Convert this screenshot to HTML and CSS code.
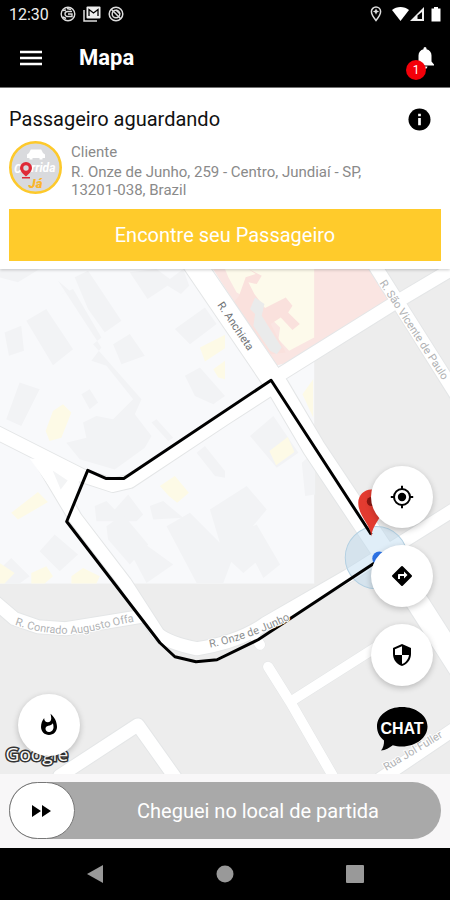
FILE: index.html
```html
<!DOCTYPE html>
<html lang="pt-BR">
<head>
<meta charset="utf-8">
<meta name="viewport" content="width=device-width, initial-scale=1">
<title>Mapa</title>
<link rel="stylesheet" href="styles.css">
</head>
<body>
<div class="app">
  <div class="status">
    <span class="clock">12:30</span>
    <svg class="status-icon" viewBox="0 0 16 16" aria-hidden="true"><g fill="none" stroke="#ddd" stroke-width="1.4"><circle cx="8" cy="8" r="6.8"/><path d="M12 5.500H7.500a2.500 2.500 0 0 0 0 5H12V8H8M3 4.500l3-.5M3 11l3 1.500M11 3.500l-4-1"/></g></svg>
    <svg class="status-icon wide" viewBox="0 0 18 16" aria-hidden="true"><path d="M1 4v11h13" fill="none" stroke="#ddd" stroke-width="1.500"/><rect x="3.500" y=".5" width="14" height="12" rx="1" fill="#eee"/><path d="M6 10V3.500l4.500 3.500L15 3.500V10" fill="none" stroke="#000" stroke-width="1.300"/></svg>
    <svg class="status-icon" viewBox="0 0 16 16" aria-hidden="true"><g fill="none" stroke="#ddd" stroke-width="1.500"><circle cx="8" cy="8" r="6.800"/><circle cx="8" cy="8" r="3.800"/><path d="M3 3l10 10M8 4l4 4"/></g></svg>
    <span class="spacer"></span>
    <svg class="status-pin" viewBox="0 0 12 16" aria-hidden="true"><path d="M6 1a4.600 4.600 0 0 0-4.600 4.600C1.400 9 6 14.500 6 14.500S10.600 9 10.600 5.600A4.600 4.600 0 0 0 6 1z" fill="none" stroke="#ddd" stroke-width="1.500"/><path d="M6 2.500l1 2.100 2.100 1-2.100 1L6 8.700l-1-2.100-2.100-1 2.100-1z" fill="#ddd"/></svg>
    <svg class="signals" viewBox="0 0 50 16" aria-hidden="true"><path d="M0 4C4.500 0 12.500 0 17 4L8.500 15z" fill="#fff"/><path d="M32 1v14H18z" fill="#eee"/><path d="M30 6v7h-4.500V9.500z" fill="#000"/><path d="M42 1h4v1.500h2.500V15.500h-9V2.500H42z" fill="#fff"/></svg>
  </div>
  <header class="bar">
    <button class="icon-btn menu" aria-label="Menu"><svg viewBox="0 0 22 16"><path d="M0 2h22M0 8h22M0 14h22" stroke="#fff" stroke-width="2.400"/></svg></button>
    <h1>Mapa</h1>
    <button class="icon-btn bell" aria-label="Notificações"><svg viewBox="0 0 18 22"><path d="M9 0a1.500 1.500 0 0 1 1.500 1.500v.7c3 .7 5 3.200 5 6.300v6l2.500 3v1H0v-1l2.500-3v-6c0-3.100 2-5.600 5-6.300v-.7A1.500 1.500 0 0 1 9 0zM6.500 19.500h5a2.500 2.500 0 0 1-5 0z" fill="#fff"/></svg><span class="badge">1</span></button>
  </header>

  <section class="card">
    <div class="card-head">
      <h2>Passageiro aguardando</h2>
      <button class="icon-btn info" aria-label="Informações"><svg viewBox="0 0 24 24"><circle cx="12" cy="12" r="11.500" fill="#000"/><path d="M10.600 6h2.800v2.600h-2.800zM10.600 10.500h2.800V18h-2.800z" fill="#fff"/></svg></button>
    </div>
    <div class="client">
      <svg class="avatar" viewBox="0 0 53 53" aria-hidden="true">
        <circle cx="26.500" cy="26.500" r="25.200" fill="#d9dadd" stroke="#fdc92b" stroke-width="2.600"/>
        <path d="M18 17v-3.500l2-1.500 1.800-3.500h10.400L34 12l2 1.500V17h-2.500v1.500h-3V17h-7v1.500h-3V17z" fill="#fff"/>
        <text class="logo-word" x="5" y="32">C</text>
        <text class="logo-word" x="22" y="31">rrida</text>
        <path d="M17 21a6 6 0 0 0-6 6c0 4 6 8.500 6 8.500s6-4.500 6-8.500a6 6 0 0 0-6-6zm0 3.300a2.700 2.700 0 1 1 0 5.400 2.700 2.700 0 0 1 0-5.400zM13 36h8v1.500h-8z" fill="#df2a38"/>
        <text class="logo-ja" x="26.500" y="47" text-anchor="middle">Já</text>
      </svg>
      <div class="client-text">
        <p>Cliente</p>
        <p>R. Onze de Junho, 259 - Centro, Jundiaí - SP, 13201-038, Brazil</p>
      </div>
    </div>
    <button class="find">Encontre seu Passageiro</button>
  </section>

  <main class="map">
    <svg class="map-art" viewBox="0 270 450 504" preserveAspectRatio="xMidYMid slice" role="img" aria-label="Mapa do trajeto">
      <defs>
        <path id="roads-main" d="M193 263 278 388 314 449 378 545 418 604 462 673"/>
        <path id="roads-mid" d="M274 379 391 306 460 265M371 261 458 399M276 386 225 419 130 482 113 486 82 476-5 432M42 462 76 519 125 583 158 634Q168 643 197 649Q240 642 265 624L350 575 460 506M-5 602 15 619 38 627 66 629 140 617M60 776 138 725 177 780M380 779 460 725"/>
        <path id="roads-small" d="M268 667 290 702 335 780M290 702 375 648M254 636 260 645"/>
        <path id="conrado" d="M15 625Q58 640 98 630T150 620"/>
        <path id="onze" d="M210 648Q255 639 305 612"/>
      </defs>
      <rect y="270" width="450" height="504" fill="#ededed"/>
      <rect y="270" width="314" height="314" fill="#f8f9fb"/>
      <path d="M213 270H314V357L277 366 225 289zM314 270H371L390 302 314 350z" fill="#fae5e2"/>
      <g transform="translate(225 270) scale(.3333)">
        <path d="M0 0H267V205L192 245 160 210 165 175 120 132 80 95 35 70 10 25z" fill="#fdfaeb"/>
        <path d="M70 0l40 20-15 25-25-5 18 35 32 42 62-32 20 25-13 20 35 35-22 18-35-38-30 20 45 85-45 5-115-150 20-25 20-55 30-10z" fill="#fae1dd"/>
        <path d="M90 85l28 20-8 35 60 95-15 20-20-10-50-75 5-35-15-15z" fill="#eaebeb"/>
        <path d="M232 375l32-45v115z" fill="#fdfae6"/>
      </g>
      <g transform="translate(0 270) scale(.3333)" fill="#f2f3f5">
        <path d="M225 25l40-20 100 150-50 35-50-70zM175 80l45-20 85 145-25 20 145 165-20 45 50 65-20 35-90 65-105-30-40-50 60-15-10-45 40-20 50 10 60-60-80-100-45-15 30-40-130-200 35 30zM80 155l60-35 80 120-60 48zM15 190l50-20 8 75-45 15zM60 340l60 20-55 110-45-20zM245 375l25-15 25 40-25 20zM390 10l80-10 40 30 40-30 18 50-25 25-40-25-60 40zM340 225l50-30 45 65-70 25zM525 180l90-65 35 50-80 60zM555 320l45-25 75 85-35 25-55-25zM455 460l15-10 50 55-15 10zM590 550l25-20 60 75v20l-30-5zM285 710l35-15 25 25 40-45 45 60-20 20H290zM450 710l40-15 60 50-90 5zM0 0h120L55 40 0 25z"/>
        <path d="M0 900l35-35 55 55-30 22H0zM120 845l45-50 70 60-55 50zM320 770l50-35 75 90-55 60-65-75zM395 855l35-35 90 65-80 55zM500 770l70-40 130 130-30 80h-80zM630 720l110-70 60 70-50 60 40 80-60 50-60-55zM750 500l70-60 75 110-65 45zM840 420l35-20 70 95-30 20zM905 580l40-35v130l-30 5zM720 790l50-25 70 120-50 40z"/>
      </g>
      <g transform="translate(0 270) scale(.3333)" fill="#fdfae6">
        <path d="M160 425l30-20 25 25-30 75-35 10-12-30zM600 235l75-38v40l-60 40zM640 300l35-25v55l-20-5zM480 650l45-30 42 50-35 30-25-20zM35 730l80-62 30 30-90 52zM0 880l45 30-30 32H0zM95 910l45-20 20 30-25 22H95zM215 920l35-25 50 25-10 22h-75zM808 545l55-42 20 45-55 40z"/>
      </g>
      <g fill="none" stroke-linejoin="round" stroke-linecap="round">
        <g stroke="#e4e6e7">
          <use href="#roads-main" stroke-width="24"/><use href="#roads-mid" stroke-width="15"/><use href="#roads-small" stroke-width="11"/>
        </g>
        <g stroke="#fff">
          <use href="#roads-main" stroke-width="22"/><use href="#roads-mid" stroke-width="13"/><use href="#roads-small" stroke-width="10"/>
        </g>
      </g>
      <path d="M30 459 46 460 80 478 74 508 62 504z" fill="#fff"/>
      <path d="M53 471 68 481 61 490z" fill="#f3f4f5"/>
      <circle cx="376" cy="558" r="31" fill="#b4d7ee" fill-opacity=".42" stroke="#b3d0e2" stroke-width="1"/>
      <path d="M371 535 271 381 124 479H106L88 471 67 522 160 643 175 657 196 662 217 660 258 640 378 561" fill="none" stroke="#000" stroke-width="3" stroke-linejoin="round"/>
      <circle cx="379" cy="559" r="7" fill="#2d74e8"/>
      <path d="M371 537C370 524 358 517 358 503a13 13 0 0 1 26 0C384 517 372 524 371 537z" fill="#e33b30"/>
      <circle cx="371" cy="502" r="4.500" fill="#8b1712"/>
      <g class="street">
        <text class="street-dark" transform="translate(217 306) rotate(56)">R. Anchieta</text>
        <text transform="translate(379 284) rotate(57)">R. São Vicente de Paulo</text>
        <text><textPath href="#conrado">R. Conrado Augusto Offa</textPath></text>
        <text class="street-mid"><textPath href="#onze">R. Onze de Junho</textPath></text>
        <text transform="translate(386 771) rotate(-31)">Rua Jol Fuller</text>
      </g>
      <text class="google" x="6" y="761">Google</text>
    </svg>

    <button class="fab heat" aria-label="Mapa de calor"><svg viewBox="0 0 24 24"><path d="M13.500.67s.74 2.650.74 4.800c0 2.060-1.350 3.730-3.410 3.730-2.070 0-3.630-1.670-3.630-3.730l.03-.36C5.210 7.510 4 10.620 4 14c0 4.420 3.580 8 8 8s8-3.580 8-8C20 8.610 17.410 3.800 13.500.67zM11.710 19c-1.780 0-3.220-1.400-3.220-3.140 0-1.620 1.050-2.760 2.810-3.120 1.770-.36 3.600-1.210 4.620-2.580.39 1.290.59 2.650.59 4.040 0 2.650-2.150 4.800-4.800 4.800z"/></svg></button>

    <div class="tools">
      <button class="fab" aria-label="Minha localização"><svg viewBox="0 0 24 24"><circle cx="12" cy="12" r="8" fill="none" stroke="#000" stroke-width="2"/><circle cx="12" cy="12" r="4.200"/><path d="M12 .8v4M12 19.200v4M.8 12h4M19.200 12h4" stroke="#000" stroke-width="2"/></svg></button>
      <button class="fab" aria-label="Rotas"><svg viewBox="0 0 24 24"><path d="M21.710 11.290l-9-9a1 1 0 0 0-1.410 0l-9 9a1 1 0 0 0 0 1.410l9 9c.39.39 1.020.39 1.410 0l9-9a1 1 0 0 0 0-1.410zM14 14.500V12h-4v3H8v-4c0-.55.450-1 1-1h5V7.500l3.500 3.500-3.500 3.500z"/></svg></button>
      <button class="fab" aria-label="Segurança"><svg viewBox="0 0 24 24"><path d="M12 1L3 5v6c0 5.550 3.840 10.740 9 12 5.160-1.260 9-6.450 9-12V5l-9-4zm0 10.990h7c-.53 4.120-3.280 7.790-7 8.940V12H5V6.300l7-3.110v8.800z"/></svg></button>
      <button class="chat" aria-label="Chat"><svg viewBox="0 0 62 48"><path d="M31 4c14 0 25.500 8.500 25.500 19.500S45 43.500 31 43.500c-3.500 0-6.500-.4-9.200-1.300C18.500 44.800 14.500 47 10 47.500c2.200-2.500 3.200-6.500 3-10C8.500 34 6 29 6 23.500 6 12.500 17 4 31 4z"/><text x="31" y="31" text-anchor="middle">CHAT</text></svg></button>
    </div>
  </main>

  <footer class="swipe">
    <button class="track">
      <span class="knob"><svg viewBox="0 0 20 12" aria-hidden="true"><path d="M0 0l9 6-9 6zM10 0l9 6-9 6z"/></svg></span>
      <span class="track-label">Cheguei no local de partida</span>
    </button>
  </footer>
  <nav class="system">
    <button aria-label="Voltar"><svg viewBox="0 0 18 18"><path d="M17 0v18L1 9z"/></svg></button>
    <button aria-label="Início"><svg viewBox="0 0 18 18"><circle cx="9" cy="9" r="8.500"/></svg></button>
    <button aria-label="Recentes"><svg viewBox="0 0 18 18"><rect width="18" height="18" rx="1"/></svg></button>
  </nav>
</div>
</body>
</html>
```
FILE: styles.css
```css
* { box-sizing: border-box; }

body {
  margin: 0;
  font-family: Roboto, "Liberation Sans", sans-serif;
  background: #f8f7f8;
}

h1, h2, p { margin: 0; }

button {
  border: 0;
  padding: 0;
  background: none;
  font: inherit;
  color: inherit;
}

svg { display: block; }

.app {
  display: flex;
  flex-direction: column;
  min-height: 100vh;
}

.status {
  display: flex;
  align-items: center;
  height: 28px;
  padding: 0 8px 0 9px;
  background: #000;
  color: #eee;
}

.clock {
  font-size: 16px;
  margin-right: 11px;
}

.status-icon {
  width: 16px;
  height: 16px;
  margin-right: 7px;
}

.status-icon.wide { width: 18px; }

.spacer { flex: 1; }

.status-pin {
  width: 12px;
  height: 16px;
  margin-right: 10px;
}

.signals {
  width: 50px;
  height: 16px;
}

.bar {
  display: flex;
  align-items: center;
  height: 60px;
  padding: 0 16px 0 20px;
  background: #000;
  border-bottom: 1px solid #777;
  color: #fff;
}

.bar h1 {
  flex: 1;
  margin-left: 37px;
  font-size: 22px;
  line-height: 28px;
  font-weight: 700;
}

.menu svg {
  width: 22px;
  height: 16px;
}

.bell { position: relative; }

.bell svg {
  width: 18px;
  height: 22px;
}

.badge {
  position: absolute;
  left: -10px;
  top: 13px;
  width: 20px;
  height: 20px;
  border-radius: 50%;
  background: #f40009;
  font-size: 12px;
  line-height: 20px;
  text-align: center;
}

.card {
  position: relative;
  z-index: 1;
  padding: 17px 9px 8px;
  background: #fff;
  box-shadow: 0 1px 3px rgba(0, 0, 0, .2);
}

.card-head {
  display: flex;
  justify-content: space-between;
  align-items: center;
  padding-right: 10px;
}

.card h2 {
  font-size: 20px;
  line-height: 28px;
  font-weight: 400;
  color: #111;
}

.info svg {
  width: 23px;
  height: 23px;
}

.client {
  display: flex;
  align-items: flex-start;
  gap: 9px;
  margin: 8px 0 10px;
}

.avatar {
  flex: none;
  width: 53px;
  height: 53px;
}

.logo-word {
  font: italic 700 12px Roboto, sans-serif;
  fill: #fff;
}

.logo-ja {
  font: italic 900 13px Roboto, sans-serif;
  fill: #f9b52b;
}

.client-text {
  display: flex;
  flex-direction: column;
  gap: 2px;
  max-width: 320px;
  padding-top: 2px;
  font-size: 15px;
  line-height: 18px;
  color: #8a8a8a;
}

.find {
  display: block;
  width: 100%;
  height: 52px;
  background: #ffcb2b;
  color: #fff;
  font-size: 20px;
}

.map {
  position: relative;
  flex: 1;
  min-height: 400px;
  overflow: hidden;
  background: #ededed;
}

.map-art {
  position: absolute;
  inset: 0;
  width: 100%;
  height: 100%;
}

.street {
  font-size: 11px;
  fill: #b0b2b4;
  stroke: #fff;
  stroke-width: 2px;
  paint-order: stroke;
}

.street-dark { fill: #6f7275; }
.street-mid { fill: #8b8e90; }

.google {
  font: 500 19px "Open Sans", sans-serif;
  fill: #fff;
  stroke: #333;
  stroke-width: 3px;
  paint-order: stroke;
}

.fab {
  display: grid;
  place-items: center;
  width: 62px;
  height: 62px;
  border-radius: 50%;
  background: #fff;
  box-shadow: 0 2px 6px rgba(0, 0, 0, .22);
}

.fab svg {
  width: 24px;
  height: 24px;
}

.heat {
  position: absolute;
  left: 18px;
  bottom: 18px;
}

.tools {
  position: absolute;
  right: 17px;
  bottom: 23px;
  display: flex;
  flex-direction: column;
  gap: 17px;
}

.chat svg {
  width: 62px;
  height: 48px;
}

.chat text {
  font: 700 16px "Liberation Sans", sans-serif;
  fill: #fff;
}

.swipe {
  padding: 8px 9px 9px;
  background: #f8f7f8;
}

.track {
  display: flex;
  align-items: center;
  width: 100%;
  height: 57px;
  border-radius: 29px;
  background: #a9a9a9;
  color: #fff;
}

.knob {
  display: grid;
  place-items: center;
  width: 66px;
  height: 57px;
  border: 1px solid #777;
  border-radius: 29px;
  background: #fff;
}

.knob svg {
  width: 20px;
  height: 12px;
}

.track-label {
  flex: 1;
  font-size: 20px;
  text-align: center;
}

.system {
  display: flex;
  justify-content: center;
  gap: 112px;
  padding: 17px 0;
  background: #000;
}

.system svg {
  width: 18px;
  height: 18px;
  fill: #999;
}
```
